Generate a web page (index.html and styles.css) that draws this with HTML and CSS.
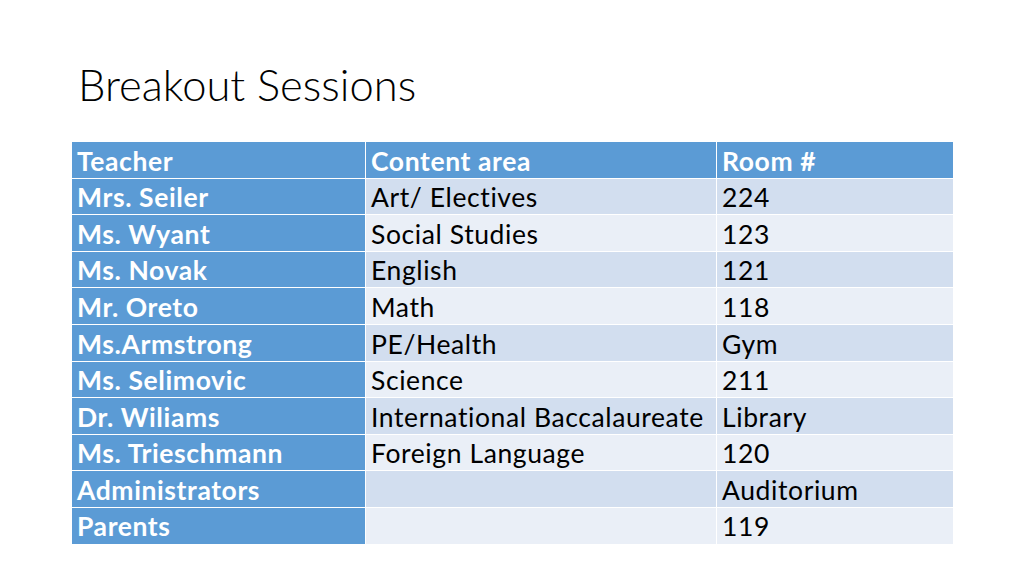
FILE: index.html
```html
<!DOCTYPE html>
<html>
<head>
<meta charset="utf-8">
<link rel="stylesheet" href="styles.css">
</head>
<body>
<div class="slide">
  <h1 class="title">Breakout Sessions</h1>
  <table class="sessions">
    <thead>
      <tr><th>Teacher</th><th>Content area</th><th>Room #</th></tr>
    </thead>
    <tbody>
      <tr><td class="name">Mrs. Seiler</td><td>Art/ Electives</td><td>224</td></tr>
      <tr><td class="name">Ms. Wyant</td><td>Social Studies</td><td>123</td></tr>
      <tr><td class="name">Ms. Novak</td><td>English</td><td>121</td></tr>
      <tr><td class="name">Mr. Oreto</td><td>Math</td><td>118</td></tr>
      <tr><td class="name">Ms.Armstrong</td><td>PE/Health</td><td>Gym</td></tr>
      <tr><td class="name">Ms. Selimovic</td><td>Science</td><td>211</td></tr>
      <tr><td class="name">Dr. Wiliams</td><td>International Baccalaureate</td><td>Library</td></tr>
      <tr><td class="name">Ms. Trieschmann</td><td>Foreign Language</td><td>120</td></tr>
      <tr><td class="name">Administrators</td><td></td><td>Auditorium</td></tr>
      <tr><td class="name">Parents</td><td></td><td>119</td></tr>
    </tbody>
  </table>
</div>
</body>
</html>
```
FILE: styles.css
```css
html, body {
  margin: 0;
  padding: 0;
  background: #ffffff;
}
.slide {
  width: 1024px;
  height: 576px;
  box-sizing: border-box;
  padding: 58px 0 0 71px;
  font-family: Lato, "Open Sans", sans-serif;
  font-variant-ligatures: none;
}
.title {
  margin: 0 0 0 7px;
  font-weight: 300;
  font-size: 43.5px;
  line-height: 52px;
  color: #000;
  height: 83px;
}
.sessions {
  border-collapse: collapse;
  width: 883px;
  table-layout: fixed;
  font-size: 26.5px;
  letter-spacing: 0.6px;
}
.sessions th, .sessions td {
  height: 33.6px;
  padding: 2px 0 0 5px;
  border: 1px solid #ffffff;
  text-align: left;
  vertical-align: middle;
  line-height: 1;
  white-space: nowrap;
}
.sessions th:nth-child(1), .sessions td:nth-child(1) { width: 288px; }
.sessions th:nth-child(2), .sessions td:nth-child(2) { width: 345px; }
.sessions th {
  background: #5b9bd5;
  color: #ffffff;
  font-weight: 700;
}
.sessions td {
  color: #000;
  font-weight: 400;
}
.sessions td.name {
  background: #5b9bd5;
  color: #ffffff;
  font-weight: 700;
}
.sessions tbody tr:nth-child(odd) td:not(.name) { background: #d2deef; }
.sessions tbody tr:nth-child(even) td:not(.name) { background: #eaeff7; }
```
